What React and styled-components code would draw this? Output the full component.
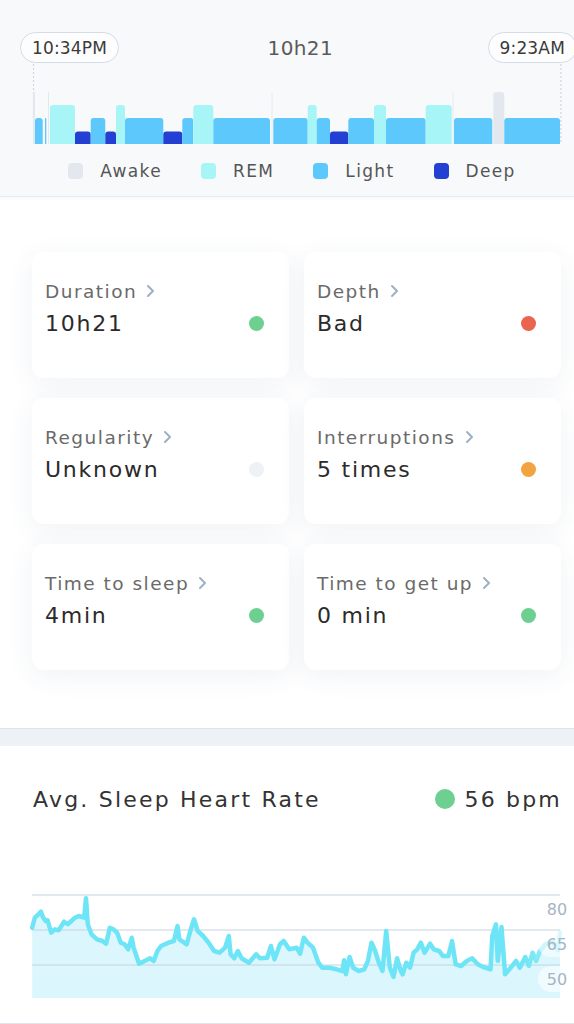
import React from "react";
import styled, { createGlobalStyle } from "styled-components";

const GlobalStyle = createGlobalStyle`
  html, body {
    margin: 0;
    padding: 0;
    background: #ffffff;
  }
  body {
    font-family: "DejaVu Sans", "Lato", sans-serif;
    color: #333;
  }
`;

const COLORS = {
  awake: "#e3e8ef",
  rem: "#a8f5f7",
  light: "#5dc8fb",
  deep: "#2340d3",
};

const TOPS = { awake: 92, rem: 105, light: 118, deep: 131.5 };
const BASE = 144;

// x0, x1, stage
const stages = [
  [33, 35, "awake"],
  [35, 42.7, "light"],
  [45, 46.3, "light"],
  [48, 49, "awake"],
  [50, 75, "rem"],
  [75, 90.7, "deep"],
  [90.7, 105.3, "light"],
  [105.3, 116, "deep"],
  [116, 125, "rem"],
  [125, 163.3, "light"],
  [163.3, 182.3, "deep"],
  [182.3, 193.3, "light"],
  [193.3, 213.3, "rem"],
  [213.3, 270, "light"],
  [273.3, 307.7, "light"],
  [307.7, 316.7, "rem"],
  [316.7, 330, "light"],
  [330, 348.3, "deep"],
  [348.3, 374, "light"],
  [374, 386, "rem"],
  [386, 425.7, "light"],
  [425.7, 451.7, "rem"],
  [454, 492.3, "light"],
  [493.3, 504.3, "awake"],
  [504.3, 560, "light"],
];

const legend = [
  ["Awake", COLORS.awake],
  ["REM", COLORS.rem],
  ["Light", COLORS.light],
  ["Deep", COLORS.deep],
];

const cards = [
  { label: "Duration", value: "10h21", status: "#6dcf90" },
  { label: "Depth", value: "Bad", status: "#ea6450" },
  { label: "Regularity", value: "Unknown", status: "#eef1f6" },
  { label: "Interruptions", value: "5 times", status: "#f1a440" },
  { label: "Time to sleep", value: "4min", status: "#6dcf90" },
  { label: "Time to get up", value: "0 min", status: "#6dcf90" },
];

// traced from the recording, in crop units
const heartRaw = [
  [88, 170], [95, 140], [105, 130], [112, 122], [118, 140], [125, 150], [130, 148],
  [140, 185], [150, 175], [160, 178], [175, 152], [185, 160], [195, 150], [205, 140],
  [215, 135], [230, 140], [235, 82], [240, 160], [250, 190], [265, 205], [280, 210],
  [290, 218], [300, 170], [310, 175], [320, 185], [330, 215], [340, 220], [350, 235],
  [360, 200], [365, 230], [380, 278], [395, 270], [410, 262], [420, 270], [430, 240],
  [440, 225], [460, 215], [475, 210], [485, 165], [490, 205], [510, 220], [520, 180],
  [530, 145], [540, 180], [555, 195], [570, 215], [585, 240], [600, 245], [615, 230],
  [625, 195], [630, 250], [640, 262], [650, 240], [660, 262], [680, 275], [700, 250],
  [710, 262], [730, 260], [740, 225], [750, 265], [765, 220], [775, 210], [790, 235],
  [810, 230], [820, 248], [830, 200], [840, 215], [855, 230], [870, 275], [880, 290],
  [900, 290], [920, 295], [935, 300], [940, 268], [945, 310], [955, 258], [965, 290],
  [980, 300], [995, 295], [1005, 270], [1015, 215], [1025, 240], [1035, 275], [1045, 300],
  [1055, 180], [1065, 290], [1075, 318], [1085, 262], [1095, 300], [1100, 310], [1110, 275],
  [1120, 290], [1130, 245], [1140, 235], [1150, 215], [1160, 245], [1175, 218], [1185, 235],
  [1200, 240], [1210, 255], [1225, 255], [1235, 210], [1245, 280], [1260, 285], [1275, 270],
  [1290, 262], [1305, 280], [1320, 288], [1340, 295], [1345, 195], [1355, 160], [1360, 270],
  [1370, 168], [1380, 310], [1395, 290], [1410, 270], [1420, 290], [1435, 258], [1445, 285],
  [1455, 245], [1465, 270], [1475, 240], [1490, 220], [1510, 210], [1525, 238], [1530, 185],
];

const heartPts = heartRaw.map(([x, y]) => [x / 2.732, y / 3 - 10]);

function Chevron() {
  return (
    <svg width="9" height="14" viewBox="0 0 9 14">
      <polyline
        points="2,2 7,7 2,12"
        fill="none"
        stroke="#9db1c4"
        strokeWidth="2"
        strokeLinecap="round"
        strokeLinejoin="round"
      />
    </svg>
  );
}

function stageBar([x0, x1, stage], i) {
  const top = TOPS[stage];
  const w = x1 - x0;
  const r = Math.min(3, w / 2);
  const d = `M${x0},${BASE} L${x0},${top + r} Q${x0},${top} ${x0 + r},${top} L${x1 - r},${top} Q${x1},${top} ${x1},${top + r} L${x1},${BASE} Z`;
  return <path key={i} d={d} fill={COLORS[stage]} />;
}

function Hypnogram() {
  return (
    <ChartSvg width="574" height="87" viewBox="0 63 574 87">
      <line x1="272" y1="92" x2="272" y2={BASE} stroke="#e6eaf0" strokeWidth="1" />
      <line x1="453" y1="92" x2="453" y2={BASE} stroke="#e6eaf0" strokeWidth="1" />
      <line x1="33.5" y1="64" x2="33.5" y2={BASE} stroke="#cdd6e1" strokeWidth="1.2" strokeDasharray="2 2" />
      <line x1="561" y1="64" x2="561" y2={BASE} stroke="#cdd6e1" strokeWidth="1.2" strokeDasharray="2 2" />
      {stages.map(stageBar)}
    </ChartSvg>
  );
}

function HeartChart() {
  const line = heartPts.map(([x, y], i) => `${i ? "L" : "M"}${x.toFixed(1)},${y.toFixed(1)}`).join(" ");
  const first = heartPts[0];
  const last = heartPts[heartPts.length - 1];
  const area = `${line} L${last[0].toFixed(1)},117 L${first[0].toFixed(1)},117 Z`;
  const ticks = [
    { y: 14, label: "80" },
    { y: 49, label: "65" },
    { y: 84, label: "50" },
  ];
  return (
    <ChartSvg width="574" height="120" viewBox="0 0 574 120">
      <defs>
        <linearGradient id="fade" x1="0" x2="1" y1="0" y2="0">
          <stop offset="0.93" stopColor="#6ee5f6" stopOpacity="1" />
          <stop offset="1" stopColor="#6ee5f6" stopOpacity="0.55" />
        </linearGradient>
      </defs>
      <path d={area} fill="#dbf7fd" />
      <line x1="32" y1="14" x2="560" y2="14" stroke="#d7e0ea" strokeWidth="1.5" />
      <line x1="32" y1="49" x2="560" y2="49" stroke="#c5d2de" strokeWidth="1" />
      <line x1="32" y1="84" x2="560" y2="84" stroke="#c5d2de" strokeWidth="1" />
      <path d={line} fill="none" stroke="url(#fade)" strokeWidth="4.5" strokeLinejoin="round" strokeLinecap="round" />
      {ticks.map((t) => (
        <g key={t.label}>
          <rect x="538" y={t.y + 1} width="36" height="26" rx="13" fill="#ffffff" opacity="0.55" />
          <TickText x="557" y={t.y + 20} textAnchor="middle">
            {t.label}
          </TickText>
        </g>
      ))}
    </ChartSvg>
  );
}

export default function App() {
  return (
    <Page>
      <GlobalStyle />
      <Header>
        <TimeRow>
          <Pill>10:34PM</Pill>
          <TotalTime>10h21</TotalTime>
          <Pill>9:23AM</Pill>
        </TimeRow>
        <Hypnogram />
        <Legend>
          {legend.map(([name, color]) => (
            <LegendItem key={name}>
              <Swatch $color={color} />
              {name}
            </LegendItem>
          ))}
        </Legend>
      </Header>

      <CardGrid>
        {cards.map((c) => (
          <Card key={c.label}>
            <CardLabel>
              {c.label}
              <Chevron />
            </CardLabel>
            <CardValueRow>
              <CardValue>{c.value}</CardValue>
              <Dot $color={c.status} $size={15} />
            </CardValueRow>
          </Card>
        ))}
      </CardGrid>

      <Band />

      <HeartSection>
        <HeartTitleRow>
          <HeartTitle>Avg. Sleep Heart Rate</HeartTitle>
          <HeartValue>
            <Dot $color="#6dcf90" $size={20} />
            56 bpm
          </HeartValue>
        </HeartTitleRow>
        <HeartChartWrap>
          <HeartChart />
        </HeartChartWrap>
      </HeartSection>
    </Page>
  );
}

const Page = styled.div`
  width: 574px;
  min-height: 1024px;
  background: #ffffff;
  overflow: hidden;
`;

const Header = styled.div`
  background: #f8f9fb;
  padding-top: 32px;
  padding-bottom: 15px;
  border-bottom: 1px solid #e8ecf1;
  box-shadow: 0 2px 4px rgba(40, 70, 110, 0.03);
`;

const TimeRow = styled.div`
  display: flex;
  align-items: center;
  justify-content: space-between;
  padding-left: 20px;
  margin-right: -3px;
  height: 31px;
`;

const Pill = styled.div`
  height: 31px;
  box-sizing: border-box;
  padding: 0 11px;
  display: flex;
  align-items: center;
  border: 1.5px solid #d4dce7;
  border-radius: 16px;
  background: #fdfdfe;
  font-size: 17px;
  color: #3a3a3a;
  letter-spacing: 0.01em;
`;

const TotalTime = styled.div`
  font-size: 20px;
  color: #5a5a5a;
  margin-right: 6px;
  letter-spacing: 0.02em;
`;

const ChartSvg = styled.svg`
  display: block;
`;

const Legend = styled.div`
  display: flex;
  justify-content: center;
  gap: 39px;
  margin-top: 11px;
  height: 20px;
  padding-left: 10px;
`;

const LegendItem = styled.div`
  display: flex;
  align-items: center;
  gap: 17px;
  font-size: 17px;
  color: #555;
  letter-spacing: 0.08em;
`;

const Swatch = styled.span`
  width: 15px;
  height: 16px;
  border-radius: 4px;
  background: ${(p) => p.$color};
`;

const CardGrid = styled.div`
  display: grid;
  grid-template-columns: 1fr 1fr;
  gap: 20px 15px;
  padding: 55px 13px 58px 32px;
`;

const Card = styled.div`
  height: 126px;
  box-sizing: border-box;
  padding: 28px 25px 0 13px;
  background: #ffffff;
  border-radius: 12px;
  box-shadow: 0 6px 28px rgba(40, 70, 110, 0.07);
  display: flex;
  flex-direction: column;
  gap: 7px;
`;

const CardLabel = styled.div`
  display: flex;
  align-items: center;
  gap: 9px;
  height: 22px;
  font-size: 18.5px;
  color: #6a6a6a;
  letter-spacing: 0.08em;
`;

const CardValueRow = styled.div`
  display: flex;
  align-items: center;
  justify-content: space-between;
  height: 28px;
`;

const CardValue = styled.div`
  font-size: 22px;
  color: #2b2b2b;
  letter-spacing: 0.08em;
`;

const Dot = styled.span`
  width: ${(p) => p.$size}px;
  height: ${(p) => p.$size}px;
  border-radius: 50%;
  background: ${(p) => p.$color};
  flex-shrink: 0;
`;

const Band = styled.div`
  height: 17px;
  background: #eef2f7;
  border-top: 1px solid #dce3eb;
`;

const HeartSection = styled.div`
  padding-top: 38px;
  padding-bottom: 22px;
  border-bottom: 1px solid #dfe5ec;
`;

const HeartTitleRow = styled.div`
  display: flex;
  align-items: center;
  justify-content: space-between;
  height: 30px;
  padding: 0 14px 0 33px;
`;

const HeartTitle = styled.div`
  font-size: 22px;
  color: #333;
  letter-spacing: 0.1em;
`;

const HeartValue = styled.div`
  display: flex;
  align-items: center;
  gap: 9px;
  font-size: 22px;
  color: #333;
  letter-spacing: 0.1em;
  margin-right: -2px;
`;

const HeartChartWrap = styled.div`
  margin-top: 67px;
`;

const TickText = styled.text`
  font-family: "DejaVu Sans", sans-serif;
  font-size: 16px;
  fill: #a7b4c2;
`;
